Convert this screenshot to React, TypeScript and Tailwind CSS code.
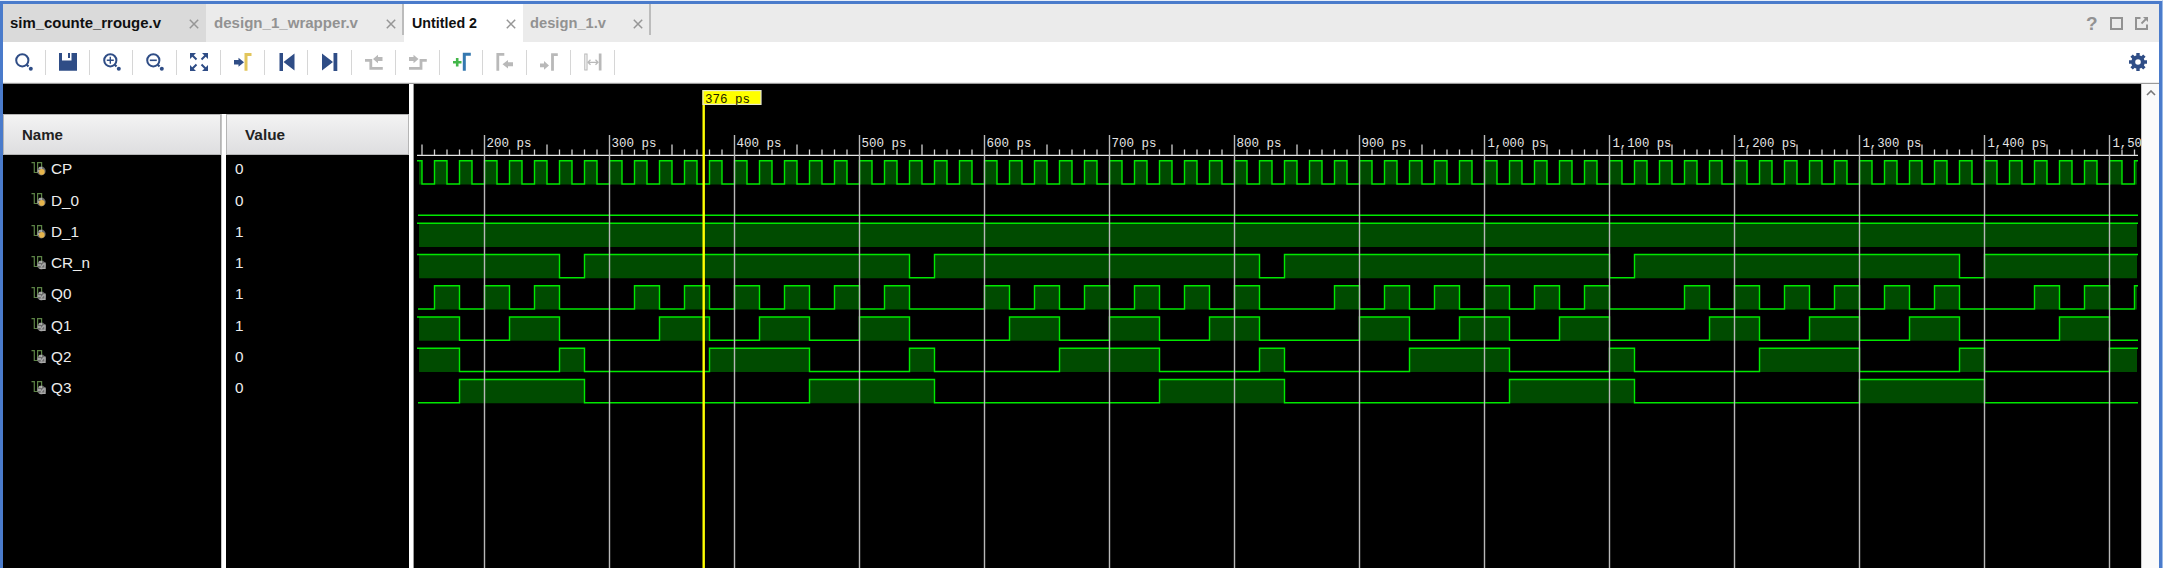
import React from "react";

const B = "#2f4d86";
const G = "#b9b9b9";

const X = (t: number) => 70.5 + (t - 200) * 1.25;
const X0 = 4;
const XE = 1724;

type Range = [number, number];
type Signal = { name: string; value: string; input: boolean; highs: Range[] };

const pulses = (first: number, width: number, starts: number[]): Range[] =>
  starts.map((s) => [first + s, first + s + width]);

const cycles = [-240, 40, 320, 600, 880, 1160, 1440];

const signals: Signal[] = [
  { name: "CP", value: "0", input: true, highs: Array.from({ length: 70 }, (_, i): Range => [140 + i * 20, 150 + i * 20]) },
  { name: "D_0", value: "0", input: true, highs: [] },
  { name: "D_1", value: "1", input: true, highs: [[0, 2000]] },
  { name: "CR_n", value: "1", input: false, highs: cycles.map((c): Range => [c - 40, c + 220]) },
  { name: "Q0", value: "1", input: false, highs: cycles.flatMap((c) => pulses(c, 20, [0, 40, 80, 120, 160, 200])) },
  { name: "Q1", value: "1", input: false, highs: cycles.flatMap((c) => pulses(c, 40, [20, 100, 180])) },
  { name: "Q2", value: "0", input: false, highs: cycles.flatMap((c): Range[] => [[c + 60, c + 140], [c + 220, c + 240]]) },
  { name: "Q3", value: "0", input: false, highs: cycles.flatMap((c) => pulses(c, 100, [140])) },
];

function Wave({ highs, row }: { highs: Range[]; row: number }) {
  const top = 76.7 + row * 31.25;
  const bottom = top + 23.3;
  const vis = highs
    .map(([a, b]) => [Math.max(X(a), X0), Math.min(X(b), XE)])
    .filter(([a, b]) => b > a);
  let d = "";
  let x = X0;
  vis.forEach(([a, b]) => {
    if (a > X0) d += `${d ? "L" : "M"}${x} ${bottom}L${a} ${bottom}L${a} ${top}`;
    else d += `M${X0 - 1} ${top}`;
    d += `L${b} ${top}`;
    if (b < XE) d += `L${b} ${bottom}`;
    x = b;
  });
  if (x < XE) d += `${d ? "L" : "M"}${x} ${bottom}L${XE} ${bottom}`;
  return (
    <g>
      {vis.map(([a, b], i) => (
        <rect key={i} x={Math.max(a, X0 + 1)} y={top} width={Math.max(0, Math.min(b, XE - 1) - Math.max(a, X0 + 1))} height={23.8} fill="#004b00" />
      ))}
      <path d={d} fill="none" stroke="#00e800" strokeWidth="1.4" />
    </g>
  );
}

function Waveform() {
  const ticks = Array.from({ length: 138 }, (_, i) => 150 + i * 10);
  const majors = ticks.filter((t) => t % 100 === 0);
  return (
    <svg className="block shrink-0 bg-black" width="1727" height="484" viewBox="0 0 1727 484">
      {signals.map((s, i) => <Wave key={s.name} highs={s.highs} row={i} />)}
      <path d={`M${X0 - 1} 71.3H${XE}`} stroke="#e4e4e4" strokeWidth="1.3" />
      {ticks.filter((t) => t % 100 !== 0).map((t) => (
        <path key={t} d={`M${X(t)} ${t % 50 === 0 ? 60.5 : 65.5}V71`} stroke="#d0d0d0" strokeWidth="1.3" />
      ))}
      {majors.map((t) => (
        <g key={t}>
          <path d={`M${X(t)} 51V484`} stroke="#b8b8b8" strokeWidth="1.4" />
          <text x={X(t) + (t >= 1000 ? 3 : 2)} y="62.7" fontSize="13.5" fill="#e6e6e6" fontFamily="'Liberation Mono', monospace" textLength={t >= 1000 ? 59 : 45} lengthAdjust="spacingAndGlyphs">
            {t >= 1000 ? `1,${String(t - 1000).padStart(3, "0")} ps` : `${t} ps`}
          </text>
        </g>
      ))}
      <path d="M289.7 6V484" stroke="#ffff00" strokeWidth="2.4" />
      <rect x="289" y="6.6" width="58" height="13.8" fill="#ffff00" stroke="#e6e6d0" strokeWidth="1.2" />
      <text x="291" y="18.8" fontSize="13.5" fill="#222200" fontFamily="'Liberation Mono', monospace" textLength="45" lengthAdjust="spacingAndGlyphs">376 ps</text>
    </svg>
  );
}

function SignalIcon({ input }: { input: boolean }) {
  return (
    <svg width="16" height="16" viewBox="0 0 16 16" className="block shrink-0">
      <path d="M0.5 1.6H3.3V11.5H6.6V1.6H10.6V8" fill="none" stroke="#5d8446" strokeWidth="1.2" />
      <circle cx="10.3" cy="10" r="4.4" fill="#8f8f8f" opacity=".75" />
      <path d="M8 7H11M7 10H10" stroke="#d8d8d8" strokeWidth="1.2" />
      {input ? <circle cx="10.8" cy="10.9" r="2.8" fill="#e6b54c" /> : <path d="M8.5 13.2H14V7.5M10 12L13 8.5" fill="none" stroke="#aaa" strokeWidth="1.4" />}
    </svg>
  );
}

const lens = (
  <>
    <circle cx="8.3" cy="8.3" r="6.1" fill="none" stroke={B} strokeWidth="2" />
    <path d="M12.8 12.8L14.5 14.5" stroke={B} strokeWidth="2.2" />
    <circle cx="16.8" cy="16.8" r="2" fill={B} />
  </>
);

const tools: React.ReactNode[] = [
  <g>{lens}</g>,
  <path d="M1 1H4V8.5H13.5V1H19V18.8H1ZM10 1H12V6H10Z" fill={B} />,
  <g>{lens}<path d="M4.8 8.3H11.8M8.3 4.8V11.8" stroke={B} strokeWidth="1.4" /></g>,
  <g>{lens}<path d="M4.8 8.3H11.8" stroke={B} strokeWidth="1.6" /></g>,
  <g><path d="M1 1H7L1 7ZM19 1V7L13 1ZM1 19V13L7 19ZM19 19H13L19 13Z" fill={B} /><path d="M3 3L7.5 7.5M17 3L12.5 7.5M3 17L7.5 12.5M17 17L12.5 12.5" stroke={B} strokeWidth="2" /></g>,
  <g><path d="M1 8H5.5V5.8L11 10.3L5.5 14.8V12.6H1Z" fill={B} /><path d="M13 18.8V2.5H18.5" fill="none" stroke="#e2c55b" strokeWidth="3" /></g>,
  <path d="M2.5 1H6V19H2.5ZM17.5 1.5V18.5L6.5 10Z" fill={B} />,
  <path d="M2 1.5L13 10L2 18.5ZM13.5 1H17.3V19H13.5Z" fill={B} />,
  <g><path d="M1 8.3H6.8V16.3H18.8" fill="none" stroke={G} strokeWidth="2.8" /><path d="M18.5 9H14V11.2L9 7L14 2.8V5H18.5Z" fill={G} /></g>,
  <g><path d="M1 16.3H13V8.3H18.8" fill="none" stroke={G} strokeWidth="2.8" /><path d="M1 5H5.5V2.8L10.5 7L5.5 11.2V9H1Z" fill={G} /></g>,
  <g><path d="M1 10.3H9.5M5.2 6V14.6" stroke="#43b649" strokeWidth="2.6" /><path d="M12.3 18.8V2.3H18.8" fill="none" stroke="#3478b0" strokeWidth="3" /></g>,
  <g><path d="M2.8 18.8V2.3H9.3" fill="none" stroke={G} strokeWidth="2.8" /><path d="M18 14.3H13V16.5L7.5 12.2L13 8V10.2H18Z" fill={G} /></g>,
  <g><path d="M13.5 18.8V2.6H18.8" fill="none" stroke={G} strokeWidth="2.8" /><path d="M1 11.5H5V9L10 13.4L5 17.8V15.3H1Z" fill={G} /></g>,
  <g><path d="M1.8 2H4V18H1.8Z" fill="none" stroke={G} strokeWidth="1.1" /><path d="M15.8 1.5H18.5V18.5H15.8Z" fill={G} /><path d="M5 10.3H15M7.5 7.8L5 10.3L7.5 12.8M12.5 7.8L15 10.3L12.5 12.8" fill="none" stroke={G} strokeWidth="1.3" /></g>,
];

function Close() {
  return (
    <svg width="10" height="10" viewBox="0 0 10 10" className="mt-px block shrink-0">
      <path d="M.8 .8L9.2 9.2M9.2 .8L.8 9.2" stroke="#969696" strokeWidth="1.5" />
    </svg>
  );
}

function Label({ children, width }: { children: string; width: number }) {
  return (
    <svg width={width} height="24" className="block shrink-0 overflow-visible">
      <text x="0" y="16.5" fontSize="15.2" fontWeight="700" fill="currentColor" textLength={width} lengthAdjust="spacingAndGlyphs">{children}</text>
    </svg>
  );
}

export default function App() {
  return (
    <div className="flex h-[568px] w-[2175px] overflow-hidden bg-white font-['Liberation_Sans',sans-serif]">
      <div className="flex w-[2163px] flex-col border-t border-r border-t-[#e6eefa] border-r-[#9bbbe8]">
        <div className="flex flex-col border-x-[3px] border-t-[3px] border-[#4a7bcb] bg-white">
          <div className="flex h-[38px] shrink-0 bg-[#ebebeb]">
            <div className="flex w-[203px] items-center bg-[#dadada] pl-[7px] text-[#101010]">
              <Label width={151}>sim_counte_rrouge.v</Label>
              <div className="ml-[28px]"><Close /></div>
            </div>
            <div className="flex w-[196px] items-center pl-2 text-[#929292]">
              <Label width={144}>design_1_wrapper.v</Label>
              <div className="ml-[28px]"><Close /></div>
            </div>
            <div className="h-[31px] w-[2px] bg-[#bcbcbc]" />
            <div className="flex w-[119px] items-center bg-white pl-[7.5px] text-[#101010]">
              <Label width={65}>Untitled 2</Label>
              <div className="ml-[29px]"><Close /></div>
            </div>
            <div className="flex w-[126px] items-center pl-[7px] text-[#929292]">
              <Label width={76}>design_1.v</Label>
              <div className="ml-[27px]"><Close /></div>
            </div>
            <div className="h-[31px] w-[2px] bg-[#bcbcbc]" />
            <div className="ml-auto flex items-center gap-3 pr-[11px] text-[#929292]">
              <span className="w-[12px] text-[19px] font-bold leading-none">?</span>
              <svg width="13" height="13" viewBox="0 0 13 13"><path d="M1 1H12V12H1Z" fill="none" stroke="#929292" strokeWidth="2" /></svg>
              <svg width="13" height="13" viewBox="0 0 13 13"><path d="M5.5 1H1V12H12V7.5" fill="none" stroke="#929292" strokeWidth="2" /><path d="M6.5 6.5L11 2" stroke="#929292" strokeWidth="1.8" /><path d="M8 0H13V5Z" fill="#929292" /></svg>
            </div>
          </div>
          <div className="flex h-[40px] shrink-0 items-center">
            <div className="-ml-px flex">
              {tools.map((t, i) => (
                <div key={i} className="flex h-[25px] w-[43.75px] shrink-0 items-center border-r border-[#d6d6d6] pl-3">
                  <svg width="20" height="20" viewBox="0 0 20 20" className="block">{t}</svg>
                </div>
              ))}
            </div>
            <svg width="18" height="18" viewBox="0 0 18 18" className="ml-auto mr-[12px]">
              <circle cx="9" cy="9" r="4.8" fill="none" stroke={B} strokeWidth="4" />
              <path d="M9 0V4M9 14V18M0 9H4M14 9H18M2.6 2.6L5 5M13 13L15.4 15.4M2.6 15.4L5 13M13 5L15.4 2.6" stroke={B} strokeWidth="3.4" />
            </svg>
          </div>
          <div className="h-[2px] shrink-0 border-b border-[#9a9a9a] bg-[#ececec]" />
          <div className="flex h-[484px] shrink-0">
            <div className="flex w-[406px] flex-col">
              <div className="h-[30px] shrink-0 bg-black" />
              <div className="flex grow">
                <div className="flex w-[218px] flex-col bg-black">
                  <div className="flex h-[41px] shrink-0 items-center border border-[#b5b5b5] bg-linear-to-b from-[#f3f3f3] to-[#dedee0] pl-[17.5px] text-[#222]"><Label width={41}>Name</Label></div>
                  <div className="-mt-[1.5px] flex flex-col">
                    {signals.map((s) => (
                      <div key={s.name} className="flex h-[31.25px] shrink-0 items-center pl-[28px] text-[15.3px] leading-none text-[#ededed]">
                        <SignalIcon input={s.input} />
                        <span className="ml-[4px]">{s.name}</span>
                      </div>
                    ))}
                  </div>
                </div>
                <div className="w-[5px] border-l border-[#c4c4c4] bg-white" />
                <div className="flex w-[183px] flex-col bg-black">
                  <div className="flex h-[41px] shrink-0 items-center border border-[#b5b5b5] bg-linear-to-b from-[#f3f3f3] to-[#dedee0] pl-[18px] text-[#222]"><Label width={40}>Value</Label></div>
                  <div className="-mt-[1.5px] flex flex-col">
                    {signals.map((s) => (
                      <div key={s.name} className="flex h-[31.25px] shrink-0 items-center pl-[9px] text-[15.3px] leading-none text-[#ededed]">{s.value}</div>
                    ))}
                  </div>
                </div>
              </div>
            </div>
            <div className="w-[5px] shrink-0 border-r border-[#9a9a9a] bg-white" />
            <Waveform />
            <div className="flex grow justify-center border-l border-[#c8c8c8] bg-[#fafafa] pt-[6px]">
              <svg width="10" height="6" viewBox="0 0 10 6"><path d="M1 5L5 1L9 5" fill="none" stroke="#777" strokeWidth="1.6" /></svg>
            </div>
          </div>
        </div>
      </div>
    </div>
  );
}
